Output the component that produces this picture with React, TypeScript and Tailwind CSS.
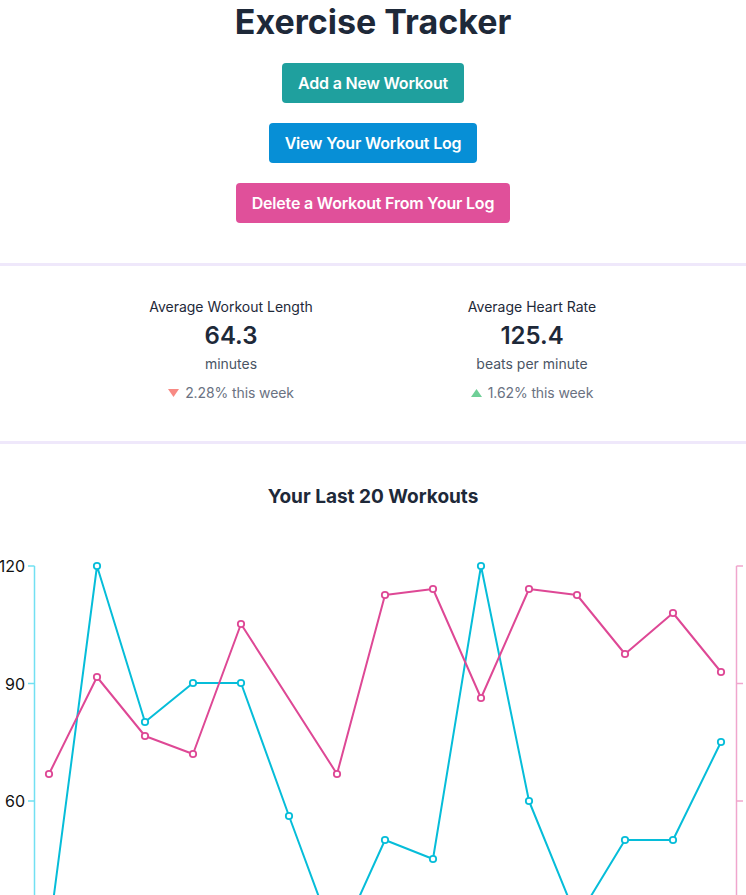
import React from 'react';

const xs = Array.from({ length: 15 }, (_, i) => 49 + i * 48);

// page y coords minus chart top (530)
const top = 530;
const duration = [933, 566, 722, 683, 683, 816, 946, 840, 859, 566, 801, 919, 840, 840, 742];
const heartRate: (number | null)[] = [774, 677, 736, 754, 624, null, 774, 595, 589, 698, 589, 595, 654, 613, 672];

const CYAN = '#06bdd9';
const PINK = '#de4895';

const StatCard = ({ label, value, unit, change, up }: { label: string; value: string; unit: string; change: string; up: boolean }) => (
  <div className="w-[301px] flex flex-col items-center">
    <div className="text-sm leading-5 text-gray-800">{label}</div>
    <div className="mt-[3px] text-2xl leading-8 font-semibold text-gray-800">{value}</div>
    <div className="mt-[2px] text-sm leading-5 text-gray-600">{unit}</div>
    <div className="mt-[9px] flex items-center text-sm leading-5 text-gray-500 tracking-[-0.1px]">
      <svg width="11" height="8" viewBox="0 0 11 8" className="mr-[6px]">
        {up ? <polygon points="0,8 11,8 5.5,0" fill="#6fcf97" /> : <polygon points="0,0 11,0 5.5,8" fill="#f88a84" />}
      </svg>
      {change}
    </div>
  </div>
);

const Chart = () => {
  const cyanPts = xs.map((x, i) => `${x},${duration[i] - top}`).join(' ');
  const pinkPts = xs
    .map((x, i) => (heartRate[i] === null ? null : `${x},${(heartRate[i] as number) - top}`))
    .filter(Boolean)
    .join(' ');
  const ticks = [
    { y: 566, label: '120' },
    { y: 683.5, label: '90' },
    { y: 801, label: '60' },
  ];
  return (
    <svg width="746" height="420" className="block mt-[19px]" style={{ fontFamily: 'Inter, sans-serif' }}>
      {/* left axis */}
      <line x1="34.5" y1={566 - top} x2="34.5" y2="420" stroke="#72e0f2" strokeWidth="1.5" />
      {ticks.map((t) => (
        <g key={t.label}>
          <line x1="28" y1={t.y - top} x2="34.5" y2={t.y - top} stroke="#72e0f2" strokeWidth="1.5" />
          <text x="25" y={t.y - top + 6} textAnchor="end" fontSize="16" fill="#111">
            {t.label}
          </text>
        </g>
      ))}
      {/* right axis */}
      <line x1="736.5" y1={566 - top} x2="736.5" y2="420" stroke="#f0a6cd" strokeWidth="1.5" />
      {ticks.map((t) => (
        <line key={t.label} x1="736.5" y1={t.y - top} x2="743" y2={t.y - top} stroke="#f0a6cd" strokeWidth="1.5" />
      ))}
      <polyline points={cyanPts} fill="none" stroke={CYAN} strokeWidth="2" strokeLinejoin="round" />
      <polyline points={pinkPts} fill="none" stroke={PINK} strokeWidth="2" strokeLinejoin="round" />
      {xs.map((x, i) => (
        <circle key={'c' + i} cx={x} cy={duration[i] - top} r="3.2" fill="#fff" stroke={CYAN} strokeWidth="1.8" />
      ))}
      {xs.map((x, i) =>
        heartRate[i] === null ? null : (
          <circle key={'p' + i} cx={x} cy={(heartRate[i] as number) - top} r="3.2" fill="#fff" stroke={PINK} strokeWidth="1.8" />
        )
      )}
    </svg>
  );
};

export default function App() {
  return (
    <div className="h-screen overflow-hidden bg-white" style={{ fontFamily: 'Inter, "Noto Sans", sans-serif' }}>
      <div className="flex flex-col items-center">
        <h1 className="text-[34px] leading-[44px] font-bold text-gray-800">Exercise Tracker</h1>
        <button className="mt-[19px] h-10 px-4 rounded bg-[#1fa09e] text-white font-semibold tracking-[-0.2px]">Add a New Workout</button>
        <button className="mt-5 h-10 px-4 rounded bg-[#078fd6] text-white font-semibold tracking-[-0.2px]">View Your Workout Log</button>
        <button className="mt-5 h-10 px-4 rounded bg-[#e0509a] text-white font-semibold tracking-[-0.2px]">Delete a Workout From Your Log</button>
      </div>

      <div className="mt-10 h-[3px] bg-[#efe8fb]" />

      <div className="flex justify-center pl-[17px] pt-[31px] pb-[38px]">
        <StatCard label="Average Workout Length" value="64.3" unit="minutes" change="2.28% this week" up={false} />
        <StatCard label="Average Heart Rate" value="125.4" unit="beats per minute" change="1.62% this week" up={true} />
      </div>

      <div className="h-[3px] bg-[#efe8fb]" />

      <h2 className="mt-[39px] text-center text-[19px] leading-7 font-bold text-gray-800">Your Last 20 Workouts</h2>
      <Chart />
    </div>
  );
}
